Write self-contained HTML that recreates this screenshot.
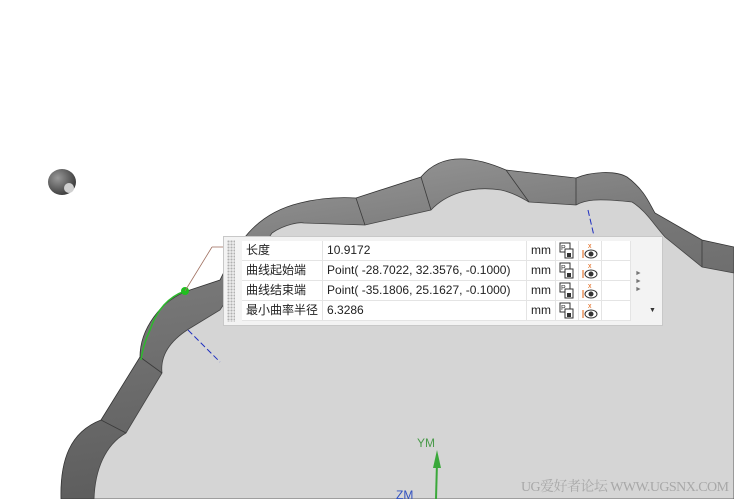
<!DOCTYPE html>
<html><head><meta charset="utf-8"><style>
html,body{margin:0;padding:0;width:734px;height:499px;overflow:hidden;background:#fff;font-family:"Liberation Sans","Noto Sans CJK SC",sans-serif}
#dlg{position:absolute;left:223px;top:236px;width:440px;height:90px;background:#f3f3f3;border:1px solid #c8c8c8;box-sizing:border-box}
#grip{position:absolute;left:3px;top:3px;width:8px;height:82px;background-image:radial-gradient(#b0b0b0 1px,transparent 1.2px);background-size:3px 3px}
table{position:absolute;left:18px;top:4px;border-collapse:collapse;font-size:12px;color:#222}
td{height:19px;line-height:19px;padding:0 4px;border-right:1px solid #e4e4e4;border-bottom:1px solid #e4e4e4;background:#fff;white-space:nowrap;overflow:hidden}
td svg{display:block}
.ic{width:16px;padding:0 3px}
.tri{position:absolute;font-size:7px;color:#777}
</style></head><body>
<svg width="734" height="499" style="position:absolute;left:0;top:0">
<defs>
<linearGradient id="w" x1="0" y1="0" x2="0.3" y2="1">
<stop offset="0" stop-color="#a0a0a0"/><stop offset="0.4" stop-color="#777"/><stop offset="1" stop-color="#5a5a5a"/></linearGradient>
<radialGradient id="s" cx="0.35" cy="0.35" r="0.7"><stop offset="0" stop-color="#999"/><stop offset="1" stop-color="#3a3a3a"/></radialGradient>
</defs>
<path d="M61,499 C60,460 70,432 101,420 L140,357 C140,330 160,300 190,290 L220,280 C235,250 250,215 300,203 C320,198 340,197 356,198 L421,177 C435,160 460,150 506,170 L576,178 C590,172 615,170 627,177 C645,190 650,205 655,213 L702,240 L734,247 V499Z" fill="url(#w)" stroke="#333" stroke-width="0.8"/>
<path d="M94,499 C95,470 105,445 126,433 L162,373 C160,355 170,340 192,327 L220,310 L272,233 C285,224 300,222 304,223 L365,225 L431,210 C445,195 470,185 501,190 C515,193 525,200 529,202 L576,205 C585,200 595,198 632,202 C645,210 652,222 665,237 L702,267 L734,273 V499Z" fill="#d5d5d5" stroke="#444" stroke-width="0.8"/>
<g stroke="#3a3a3a" stroke-width="0.8">
<line x1="101" y1="420" x2="126" y2="433"/><line x1="140" y1="357" x2="162" y2="373"/>
<line x1="356" y1="198" x2="365" y2="225"/><line x1="421" y1="177" x2="431" y2="210"/><line x1="506" y1="170" x2="529" y2="202"/>
<line x1="576" y1="178" x2="576" y2="205"/><line x1="702" y1="240" x2="702" y2="267"/>
</g>
<ellipse cx="62" cy="182" rx="14" ry="13" fill="url(#s)"/>
<ellipse cx="69" cy="188" rx="5" ry="5" fill="#d0d0d0"/>
<path d="M185,291 Q160,300 150,330 Q143,345 141,360" fill="none" stroke="#2db82d" stroke-width="1.5"/>
<circle cx="185" cy="291" r="4" fill="#1fbf1f"/>
<line x1="185" y1="291" x2="212" y2="247" stroke="#a07060" stroke-width="0.8"/>
<line x1="212" y1="247" x2="223" y2="247" stroke="#a07060" stroke-width="0.8"/>
<line x1="188" y1="330" x2="220" y2="362" stroke="#2030c0" stroke-width="1" stroke-dasharray="6,3"/>
<line x1="588" y1="210" x2="594" y2="236" stroke="#2030c0" stroke-width="1" stroke-dasharray="6,3"/>
<line x1="436" y1="499" x2="437" y2="462" stroke="#3aa83a" stroke-width="2"/>
<path d="M433,468 L437,450 L441,468 Z" fill="#3aa83a"/>
<text x="417" y="447" font-size="12" fill="#4a9a4a" font-family="Liberation Sans">YM</text>
<text x="396" y="499" font-size="12" fill="#3050c0" font-family="Liberation Sans">ZM</text>
<text x="521" y="491" font-size="14" fill="#a8a8a8" font-family="Liberation Serif,'Noto Serif CJK SC',serif" textLength="208">UG爱好者论坛 WWW.UGSNX.COM</text>
</svg>
<div id="dlg"><div id="grip"></div>
<table>
<tr><td style="width:72px">长度</td><td style="width:195px">10.9172</td><td>mm</td><td class="ic"><svg width="16" height="17"><rect x="1" y="1" width="10" height="9" fill="#fff" stroke="#333"/><text x="2" y="8" font-size="7" fill="#333">P</text><rect x="6" y="7" width="8" height="9" fill="#fff" stroke="#333"/><rect x="8" y="11" width="4" height="4" fill="#333"/></svg></td><td class="ic"><svg width="16" height="17"><text x="6" y="6" font-size="7" fill="#e06010" font-family="Liberation Sans">x</text><line x1="1" y1="8" x2="1" y2="16" stroke="#e06010"/><ellipse cx="9" cy="12" rx="6" ry="4" fill="#fff" stroke="#333"/><circle cx="9" cy="12" r="2.5" fill="#333"/></svg></td><td style="width:20px"></td></tr>
<tr><td>曲线起始端</td><td>Point( -28.7022, 32.3576, -0.1000)</td><td>mm</td><td class="ic"><svg width="16" height="17"><rect x="1" y="1" width="10" height="9" fill="#fff" stroke="#333"/><text x="2" y="8" font-size="7" fill="#333">P</text><rect x="6" y="7" width="8" height="9" fill="#fff" stroke="#333"/><rect x="8" y="11" width="4" height="4" fill="#333"/></svg></td><td class="ic"><svg width="16" height="17"><text x="6" y="6" font-size="7" fill="#e06010" font-family="Liberation Sans">x</text><line x1="1" y1="8" x2="1" y2="16" stroke="#e06010"/><ellipse cx="9" cy="12" rx="6" ry="4" fill="#fff" stroke="#333"/><circle cx="9" cy="12" r="2.5" fill="#333"/></svg></td><td></td></tr>
<tr><td>曲线结束端</td><td>Point( -35.1806, 25.1627, -0.1000)</td><td>mm</td><td class="ic"><svg width="16" height="17"><rect x="1" y="1" width="10" height="9" fill="#fff" stroke="#333"/><text x="2" y="8" font-size="7" fill="#333">P</text><rect x="6" y="7" width="8" height="9" fill="#fff" stroke="#333"/><rect x="8" y="11" width="4" height="4" fill="#333"/></svg></td><td class="ic"><svg width="16" height="17"><text x="6" y="6" font-size="7" fill="#e06010" font-family="Liberation Sans">x</text><line x1="1" y1="8" x2="1" y2="16" stroke="#e06010"/><ellipse cx="9" cy="12" rx="6" ry="4" fill="#fff" stroke="#333"/><circle cx="9" cy="12" r="2.5" fill="#333"/></svg></td><td></td></tr>
<tr><td>最小曲率半径</td><td>6.3286</td><td>mm</td><td class="ic"><svg width="16" height="17"><rect x="1" y="1" width="10" height="9" fill="#fff" stroke="#333"/><text x="2" y="8" font-size="7" fill="#333">P</text><rect x="6" y="7" width="8" height="9" fill="#fff" stroke="#333"/><rect x="8" y="11" width="4" height="4" fill="#333"/></svg></td><td class="ic"><svg width="16" height="17"><text x="6" y="6" font-size="7" fill="#e06010" font-family="Liberation Sans">x</text><line x1="1" y1="8" x2="1" y2="16" stroke="#e06010"/><ellipse cx="9" cy="12" rx="6" ry="4" fill="#fff" stroke="#333"/><circle cx="9" cy="12" r="2.5" fill="#333"/></svg></td><td></td></tr>
</table>
<div class="tri" style="left:411px;top:33px;line-height:8px">►<br>►<br>►</div>
<div class="tri" style="left:425px;top:70px;color:#333">▼</div>
</div>
</body></html>
